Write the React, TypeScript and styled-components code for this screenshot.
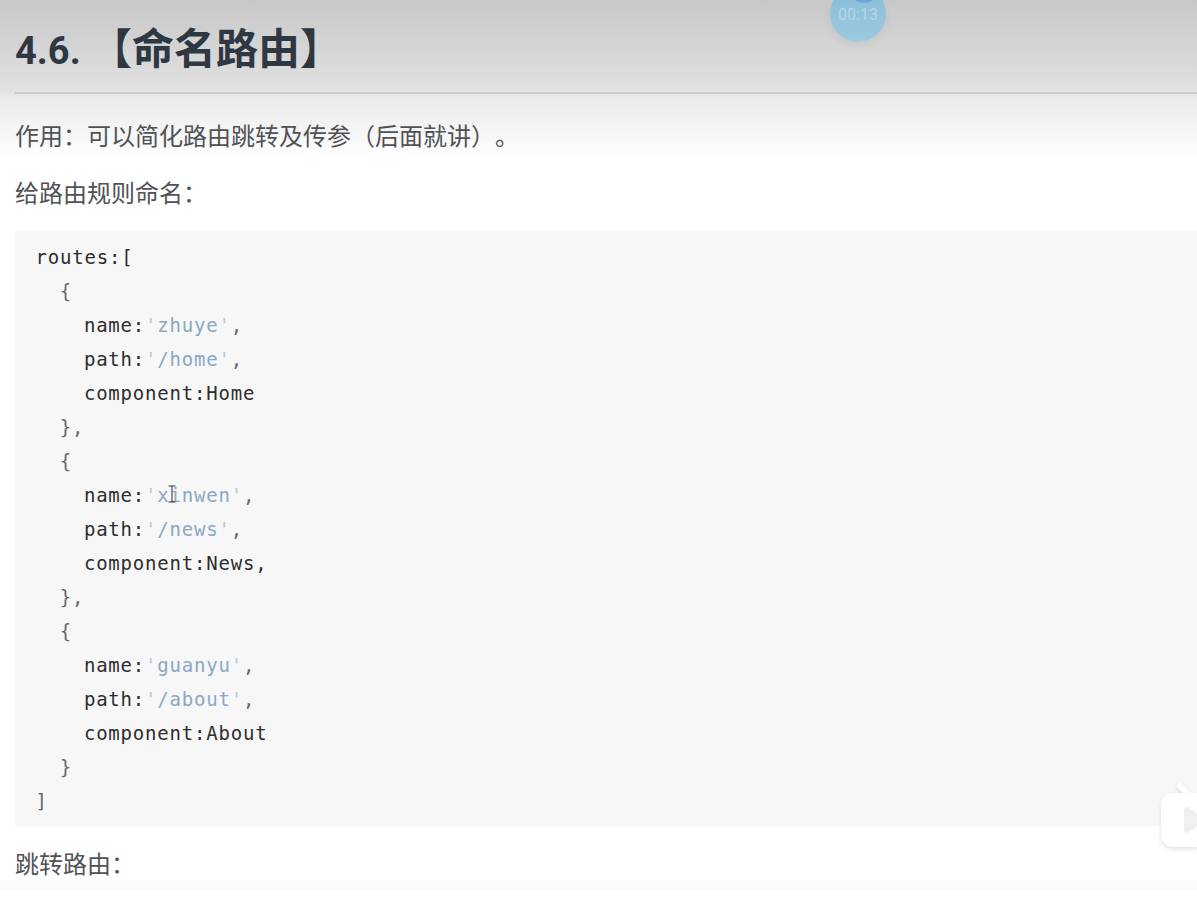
import React from 'react';
import styled, { createGlobalStyle } from 'styled-components';

const GlobalStyle = createGlobalStyle`
  html, body {
    margin: 0;
    padding: 0;
    background: #fff;
  }
`;

type Kind = 'str' | 'quote' | 'punct';
type Part = { text: string; kind?: Kind };
type Line = { indent: number; parts: Part[] };

const quoted = (value: string): Part[] => [
  { text: "'", kind: 'quote' },
  { text: value, kind: 'str' },
  { text: "'", kind: 'quote' },
  { text: ',', kind: 'punct' },
];

const entry = (name: string, path: string, comp: string, tail: string): Line[] => [
  { indent: 1, parts: [{ text: '{', kind: 'punct' }] },
  { indent: 2, parts: [{ text: 'name:' }, ...quoted(name)] },
  { indent: 2, parts: [{ text: 'path:' }, ...quoted(path)] },
  { indent: 2, parts: [{ text: `component:${comp}` }] },
  { indent: 1, parts: [{ text: tail, kind: 'punct' }] },
];

const lines: Line[] = [
  { indent: 0, parts: [{ text: 'routes:[' }] },
  ...entry('zhuye', '/home', 'Home', '},'),
  ...entry('xinwen', '/news', 'News,', '},'),
  ...entry('guanyu', '/about', 'About', '}'),
  { indent: 0, parts: [{ text: ']', kind: 'punct' }] },
];

const App = () => (
  <Page>
    <GlobalStyle />
    <Article>
      <Heading>
        4.6. <HeadingCjk>【命名路由】</HeadingCjk>
      </Heading>
      <Rule />
      <Paragraph $gap={26}>作用：可以简化路由跳转及传参（后面就讲）。</Paragraph>
      <Paragraph $gap={23}>给路由规则命名：</Paragraph>
      <CodeBlock>
        {lines.map((line, i) => (
          <CodeLine key={i} $indent={line.indent}>
            {line.parts.map((part, j) => (
              <Token key={j} $kind={part.kind}>
                {part.text}
              </Token>
            ))}
          </CodeLine>
        ))}
      </CodeBlock>
      <LastParagraph $gap={24}>跳转路由：</LastParagraph>
    </Article>
    <BottomBand />

    <TimerBubble>
      <TimerCap />
      <TimerText>00:13</TimerText>
    </TimerBubble>

    <TextCursor width="12" height="18" viewBox="0 0 12 18">
      <path d="M2.5 1h7M6 1v16M2.5 17h7" fill="none" stroke="#333" strokeWidth="1" />
    </TextCursor>

    <TvWidget width="40" height="70" viewBox="0 0 40 70">
      <path d="M23 5l9 9" stroke="#fff" strokeWidth="6" strokeLinecap="round" />
      <rect x="4" y="12" width="60" height="54" rx="12" fill="#fff" />
      <path d="M27 29c0-3 2-4 4-3l9 6v14l-9 6c-2 1-4 0-4-3z" fill="#f0f0f0" />
    </TvWidget>
  </Page>
);

export default App;

const Page = styled.div`
  position: relative;
  display: flex;
  flex-direction: column;
  width: 1197px;
  height: 915px;
  overflow: hidden;
  background: linear-gradient(#c8c8c8 0, #e0e0e0 88px, #ececec 100px, #f8f8f8 140px, #fff 156px) no-repeat 0 0 / 100%
    156px;
  font-family: Roboto, 'Noto Sans CJK SC', sans-serif;
  color: #505255;
  text-spacing-trim: space-all;
`;

const Article = styled.div`
  display: flex;
  flex-direction: column;
  padding-left: 15px;
`;

const Heading = styled.h2`
  margin: 0;
  height: 92px;
  padding-top: 22px;
  box-sizing: border-box;
  font-size: 38px;
  line-height: 56px;
  font-weight: 700;
  color: #2f3742;
  white-space: nowrap;
`;

const HeadingCjk = styled.span`
  font-size: 42px;
`;

const Rule = styled.div`
  height: 2px;
  background: #cbcbcb;
`;

const Paragraph = styled.p<{ $gap: number }>`
  margin: ${(p) => p.$gap}px 0 0;
  font-size: 24px;
  line-height: 34px;
  white-space: nowrap;
`;

const LastParagraph = styled(Paragraph)`
  line-height: 30px;
`;

const CodeBlock = styled.div`
  display: flex;
  flex-direction: column;
  margin-top: 20px;
  padding: 9px 0 8px 20.5px;
  background: #f7f7f7;
  font-family: 'DejaVu Sans Mono', 'Liberation Mono', monospace;
  font-size: 19px;
  letter-spacing: 0.8px;
  color: #2e2e2e;
`;

const CodeLine = styled.div<{ $indent: number }>`
  height: 34px;
  line-height: 34px;
  padding-left: ${(p) => p.$indent * 24.2}px;
  white-space: pre;
`;

const tokenColors: Record<Kind, string> = {
  str: '#8aa8c6',
  quote: '#b9c9d8',
  punct: '#66686a',
};

const Token = styled.span<{ $kind?: Kind }>`
  color: ${(p) => (p.$kind ? tokenColors[p.$kind] : 'inherit')};
`;

const BottomBand = styled.div`
  height: 11px;
  background: #fbfbfb;
`;

const TimerBubble = styled.div`
  position: absolute;
  left: 830px;
  top: -14px;
  width: 56px;
  height: 56px;
  border-radius: 50%;
  overflow: hidden;
  background: linear-gradient(#86bcd8, #9ccadf);
  box-shadow: 0 4px 8px rgba(0, 0, 0, 0.06);
  display: flex;
  align-items: center;
  justify-content: center;
`;

const TimerCap = styled.div`
  position: absolute;
  left: 18px;
  top: 0;
  width: 32px;
  height: 17px;
  border-radius: 0 0 16px 16px;
  background: #6ba3dc;
`;

const TimerText = styled.span`
  position: relative;
  font-size: 16px;
  color: #b7d5e3;
`;

const TextCursor = styled.svg`
  position: absolute;
  left: 166px;
  top: 485px;
`;

const TvWidget = styled.svg`
  position: absolute;
  left: 1157px;
  top: 781px;
  filter: drop-shadow(0 2px 2px rgba(0, 0, 0, 0.12));
`;
